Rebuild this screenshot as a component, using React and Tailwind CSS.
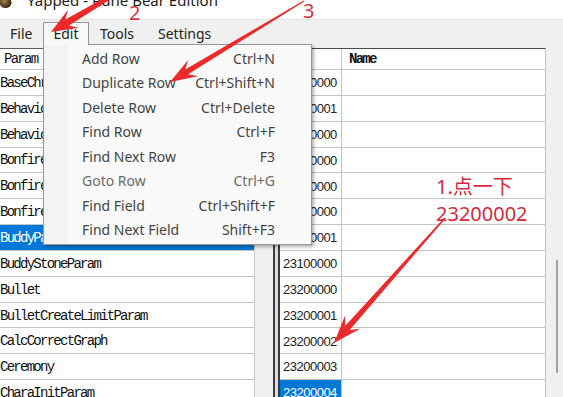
import React from "react";

const params = [
  "BaseChrSelectParam",
  "BehaviorParam",
  "BehaviorParam_PC",
  "BonfireWarpParam",
  "BonfireWarpSubCategoryParam",
  "BonfireWarpTabParam",
  "BuddyParam",
  "BuddyStoneParam",
  "Bullet",
  "BulletCreateLimitParam",
  "CalcCorrectGraph",
  "Ceremony",
  "CharaInitParam",
];

const ids = [
  "22000000",
  "22000001",
  "22100000",
  "22200000",
  "22300000",
  "22400000",
  "22400001",
  "23100000",
  "23200000",
  "23200001",
  "23200002",
  "23200003",
  "23200004",
];

const menuItems = [
  ["Add Row", "Ctrl+N"],
  ["Duplicate Row", "Ctrl+Shift+N"],
  ["Delete Row", "Ctrl+Delete"],
  ["Find Row", "Ctrl+F"],
  ["Find Next Row", "F3"],
  ["Goto Row", "Ctrl+G"],
  ["Find Field", "Ctrl+Shift+F"],
  ["Find Next Field", "Shift+F3"],
];

function Arrow({ x1, y1, x2, y2, w1, w2, hl, hw, color }) {
  const dx = x2 - x1;
  const dy = y2 - y1;
  const L = Math.hypot(dx, dy);
  const ux = dx / L;
  const uy = dy / L;
  const nx = -uy;
  const ny = ux;
  const bx = x2 - ux * hl;
  const by = y2 - uy * hl;
  const jx = x2 - ux * hl * 0.72;
  const jy = y2 - uy * hl * 0.72;
  const p = [
    [x1 + (nx * w1) / 2, y1 + (ny * w1) / 2],
    [jx + (nx * w2) / 2, jy + (ny * w2) / 2],
    [bx + (nx * hw) / 2, by + (ny * hw) / 2],
    [x2, y2],
    [bx - (nx * hw) / 2, by - (ny * hw) / 2],
    [jx - (nx * w2) / 2, jy - (ny * w2) / 2],
    [x1 - (nx * w1) / 2, y1 - (ny * w1) / 2],
  ];
  return (
    <polygon
      points={p.map((q) => q.map((v) => v.toFixed(2)).join(",")).join(" ")}
      fill={color}
    />
  );
}

export default function App() {
  return (
    <div className="relative w-[563px] h-[397px] overflow-hidden bg-white font-['Noto_Sans',sans-serif]">
      {/* Title bar */}
      <div className="h-[19px] bg-white flex items-start overflow-hidden">
        <svg width="13" height="12" viewBox="0 0 13 12" className="shrink-0 -mt-[3px] -ml-[1px]">
          <defs>
            <radialGradient id="ball" cx="0.4" cy="0.4" r="0.7">
              <stop offset="0" stopColor="#a08050" />
              <stop offset="0.6" stopColor="#5a4020" />
              <stop offset="1" stopColor="#2a1c0c" />
            </radialGradient>
          </defs>
          <ellipse cx="6.5" cy="5.5" rx="6" ry="5.5" fill="url(#ball)" />
        </svg>
        <div className="ml-[15px] -mt-[7px] text-[15px] leading-[15px] text-[#1c1c1c] whitespace-nowrap">
          Yapped - Rune Bear Edition
        </div>
      </div>

      {/* Menu bar */}
      <div className="h-[29px] bg-[#f0f0f0] border-t border-[#e4e4e4] pt-[2px] flex items-start text-[14px] text-[#222]">
        <div className="w-[43px] h-[22px] pl-[10px] flex items-center">File</div>
        <div className="relative z-20 w-[46px] h-[23px] pb-[1px] border-l border-t border-r border-[#979797] bg-[#f8f8f8] flex items-center justify-center">
          Edit
        </div>
        <div className="ml-[11px] w-[58px] h-[22px] flex items-center">Tools</div>
        <div className="h-[22px] flex items-center">Settings</div>
      </div>

      {/* Main area */}
      <div className="flex h-[349px]">
        {/* Left table */}
        <div className="w-[255px] border-r border-[#c4c4c4] border-t border-t-[#5c5c5c] flex flex-col font-['Liberation_Mono',monospace] text-[14px] tracking-[-1.73px] text-[#111] overflow-hidden">
          <div className="h-[21px] shrink-0 border-b border-[#c4c4c4] pl-[4px] pt-[1px] flex items-center whitespace-nowrap">
            Param
          </div>
          {params.map((p, i) => (
            <div
              key={i}
              className={
                i === 6
                  ? "h-[25.85px] shrink-0 border-b border-[#c4c4c4] bg-[#0078d7] text-white pt-[2px] flex items-center whitespace-nowrap"
                  : "h-[25.85px] shrink-0 border-b border-[#c4c4c4] pt-[2px] flex items-center whitespace-nowrap"
              }
            >
              {p}
            </div>
          ))}
        </div>

        {/* gap & splitter */}
        <div className="w-[18px] bg-[#f0f0f0]" />
        <div className="w-[2px] bg-[#3c3c3c]" />
        <div className="w-[3px] bg-[#dcdcdc]" />
        <div className="w-[2px] bg-[#3c3c3c]" />

        {/* Right table */}
        <div className="w-[266px] border-t border-[#4a4a4a] border-r border-r-[#c4c4c4] flex flex-col overflow-hidden">
          <div className="h-[21px] shrink-0 border-b border-[#c4c4c4] flex">
            <div className="w-[62px] border-r border-[#c4c4c4]" />
            <div className="flex-1 pl-[7px] pt-[1px] flex items-center font-['Liberation_Mono',monospace] text-[14px] tracking-[-1.73px] text-[#111] font-bold">
              Name
            </div>
          </div>
          {ids.map((id, i) => (
            <div key={i} className="h-[25.85px] shrink-0 border-b border-[#c4c4c4] flex">
              <div
                className={
                  i === 12
                    ? "w-[62px] border-r border-[#c4c4c4] bg-[#0078d7] text-white pl-[3px] pt-[1px] flex items-center font-['Liberation_Sans',sans-serif] text-[13px] tracking-[-0.5px]"
                    : "w-[62px] border-r border-[#c4c4c4] text-[#222] pl-[3px] pt-[1px] flex items-center font-['Liberation_Sans',sans-serif] text-[13px] tracking-[-0.5px]"
                }
              >
                {id}
              </div>
              <div className="flex-1" />
            </div>
          ))}
        </div>

        {/* Scrollbar */}
        <div className="w-[17px] bg-[#f0f0f0] flex flex-col">
          <div className="mt-[212px] ml-[10px] w-[2px] h-[113px] bg-[#a3a3a3]" />
        </div>
      </div>

      {/* Edit dropdown menu */}
      <div className="absolute left-[43px] top-[44px] z-10 w-[269px] h-[201px] border border-[#979797] bg-[#f9f9f9] shadow-[2px_2px_3px_rgba(0,0,0,0.3)] flex text-[14px]">
        <div className="w-[24px] bg-[#f3f3f3]" />
        <div className="flex-1 pt-[1px] flex flex-col">
          {menuItems.map(([label, key], i) => (
            <div
              key={i}
              className={
                i === 5
                  ? "h-[24.5px] pl-[14px] pr-[36px] flex items-center justify-between text-[#6c6c6c] whitespace-nowrap"
                  : "h-[24.5px] pl-[14px] pr-[36px] flex items-center justify-between text-[#444] whitespace-nowrap"
              }
            >
              <span>{label}</span>
              <span>{key}</span>
            </div>
          ))}
        </div>
      </div>

      {/* Annotations */}
      <svg className="absolute left-0 top-0 z-30 pointer-events-none" width="563" height="397">
        <Arrow x1={112} y1={-4} x2={51} y2={32} w1={4} w2={7} hl={26} hw={21} color="#ec2a2a" />
        <Arrow x1={304} y1={1} x2={170} y2={82} w1={1.2} w2={5.5} hl={27} hw={19} color="#ec2a2a" />
        <Arrow x1={445} y1={218} x2={334} y2={343} w1={1.5} w2={6} hl={28} hw={20} color="#ec2a2a" />
      </svg>
      <div className="absolute left-[129px] top-[0px] z-30 text-[20px] leading-[26px] text-[#d83344]">2</div>
      <div className="absolute left-[303px] top-[-2px] z-30 text-[20px] leading-[26px] text-[#d83344]">3</div>
      <div className="absolute left-[436px] top-[173px] z-30 text-[20px] leading-[27px] text-[#d42b3f] font-['Noto_Sans','Noto_Sans_CJK_SC',sans-serif] whitespace-nowrap">
        <div>1.点一下</div>
        <div>23200002</div>
      </div>
    </div>
  );
}
